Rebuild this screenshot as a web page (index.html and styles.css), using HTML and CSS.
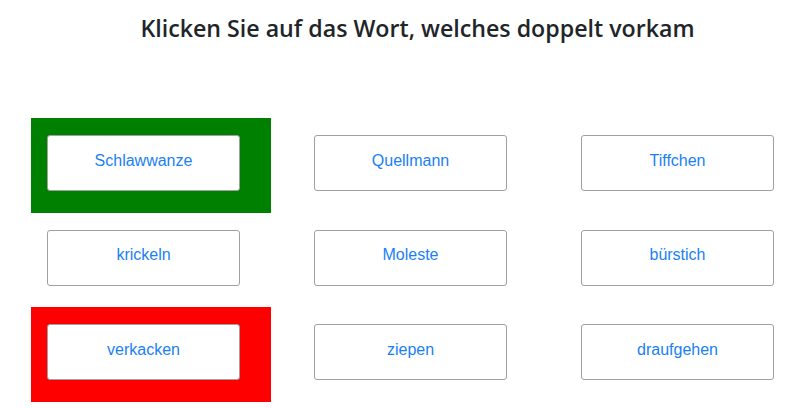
FILE: index.html
```html
<!DOCTYPE html>
<html lang="de">
<head>
<meta charset="utf-8">
<title>Wortspiel</title>
<link rel="stylesheet" href="styles.css">
</head>
<body>
<h1 class="title">Klicken Sie auf das Wort, welches doppelt vorkam</h1>
<div class="grid">
  <div class="cell correct"><button class="word">Schlawwanze</button></div>
  <div class="cell"><button class="word">Quellmann</button></div>
  <div class="cell"><button class="word">Tiffchen</button></div>
  <div class="cell"><button class="word">krickeln</button></div>
  <div class="cell"><button class="word">Moleste</button></div>
  <div class="cell"><button class="word">bürstich</button></div>
  <div class="cell wrong"><button class="word">verkacken</button></div>
  <div class="cell"><button class="word">ziepen</button></div>
  <div class="cell"><button class="word">draufgehen</button></div>
</div>
</body>
</html>
```
FILE: styles.css
```css
html, body {
  margin: 0;
  padding: 0;
  background: #ffffff;
  overflow: hidden;
}
body {
  width: 800px;
  height: 408px;
}
.title {
  margin: 0;
  padding: 12px 0 0 35px;
  height: 106px;
  box-sizing: border-box;
  text-align: center;
  font-family: "Open Sans", "Noto Sans", sans-serif;
  font-weight: 600;
  font-size: 23.2px;
  line-height: 32px;
  color: #212529;
}
.grid {
  display: grid;
  grid-template-columns: repeat(3, 240px);
  grid-auto-rows: 94.5px;
  column-gap: 27px;
  margin: 12px 0 0 31px;
}
.cell {
  padding: 17px 0 0 16px;
  box-sizing: border-box;
}
.correct { background: #008000; }
.wrong { background: #ff0000; }
.word {
  display: block;
  box-sizing: border-box;
  width: 193px;
  height: 56px;
  margin: 0;
  padding: 0 0 5px;
  background: #ffffff;
  border: 1.5px solid #a0a0a0;
  border-radius: 3px;
  font-family: "Liberation Sans", Arial, sans-serif;
  font-size: 16px;
  color: #1a7ff5;
  text-align: center;
  cursor: pointer;
}
```
